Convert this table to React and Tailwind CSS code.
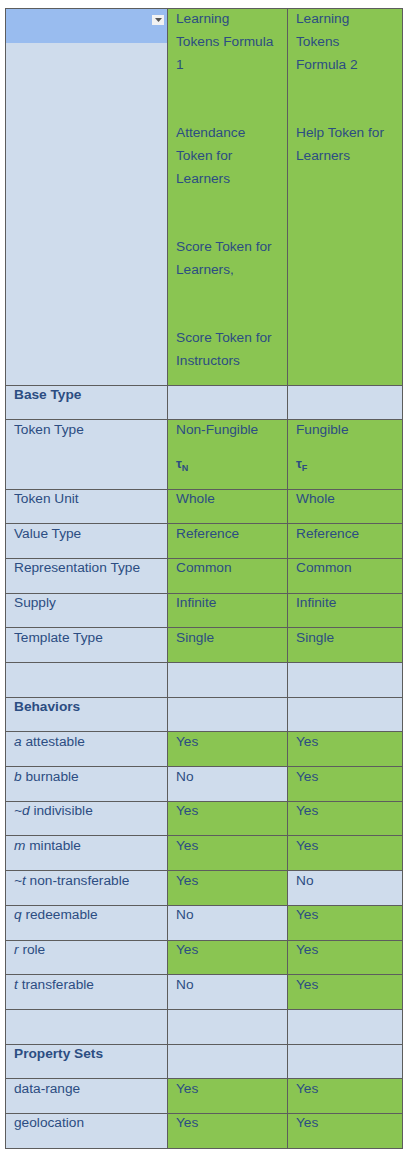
// Token taxonomy comparison table
const G = 'bg-[#8ac552]'
const B = 'bg-[#cfdcec]'

const rows = [
  { type: 'head', label: 'Base Type' },
  { type: 'tokenType' },
  { label: 'Token Unit', v: [['Whole', G], ['Whole', G]] },
  { label: 'Value Type', v: [['Reference', G], ['Reference', G]] },
  { label: 'Representation Type', v: [['Common', G], ['Common', G]] },
  { label: 'Supply', v: [['Infinite', G], ['Infinite', G]] },
  { label: 'Template Type', v: [['Single', G], ['Single', G]] },
  { type: 'empty' },
  { type: 'head', label: 'Behaviors' },
  { sym: 'a', label: 'attestable', v: [['Yes', G], ['Yes', G]] },
  { sym: 'b', label: 'burnable', v: [['No', B], ['Yes', G]] },
  { sym: '~d', label: 'indivisible', v: [['Yes', G], ['Yes', G]] },
  { sym: 'm', label: 'mintable', v: [['Yes', G], ['Yes', G]] },
  { sym: '~t', label: 'non-transferable', v: [['Yes', G], ['No', B]] },
  { sym: 'q', label: 'redeemable', v: [['No', B], ['Yes', G]] },
  { sym: 'r', label: 'role', v: [['Yes', G], ['Yes', G]] },
  { sym: 't', label: 'transferable', v: [['No', B], ['Yes', G]] },
  { type: 'empty' },
  { type: 'head', label: 'Property Sets' },
  { label: 'data-range', v: [['Yes', G], ['Yes', G]] },
  { label: 'geolocation', v: [['Yes', G], ['Yes', G]] },
]

const cell = 'border border-[#5d5d5d] align-top pl-[8px] pr-[3px] pt-0 pb-[13.2px] leading-[23px]'

function Tau({ sub }) {
  return (
    <div className="mt-[11.5px] leading-[23px] font-bold text-[13px]">
      τ<sub className="text-[9px] align-baseline relative top-[3px]">{sub}</sub>
    </div>
  )
}

function Cell({ bg, className = '', children }) {
  return (
    <td className={`${cell} ${bg} ${className}`}>
      <div className="-mt-[2.5px]">{children}</div>
    </td>
  )
}

export default function App() {
  return (
    <div className="bg-white min-h-[1157px] pl-[5px] pt-[8px] text-[#2c4d82] text-[13.7px]" style={{ fontFamily: '"Liberation Sans", Arial, sans-serif' }}>
      <table className="table-fixed border-collapse w-[397px] border border-[#566f9c]">
        <colgroup>
          <col className="w-[162px]" />
          <col className="w-[120px]" />
          <col className="w-[115px]" />
        </colgroup>
        <tbody>
          <tr>
            <td className={`border border-[#5d5d5d] align-top p-0 ${B}`}>
              <div className="h-[34px] bg-[#99bcef] flex justify-end items-start pt-[6px] pr-[3px]">
                <div className="w-[12px] h-[10px] bg-[#f2f2f2] flex items-center justify-center">
                  <svg width="7" height="4" viewBox="0 0 7 4"><path d="M0 0h7L3.5 4z" fill="#555" /></svg>
                </div>
              </div>
            </td>
            <Cell bg={G}>
              <div className="mb-[45px]">Learning<br />Tokens Formula<br />1</div>
              <div className="mb-[45px]">Attendance<br />Token for<br />Learners</div>
              <div className="mb-[45px]">Score Token for<br />Learners,</div>
              <div>Score Token for<br />Instructors</div>
            </Cell>
            <Cell bg={G}>
              <div className="mb-[45px]">Learning<br />Tokens<br />Formula 2</div>
              <div>Help Token for<br />Learners</div>
            </Cell>
          </tr>
          {rows.map((r, i) => {
            if (r.type === 'head') {
              return (
                <tr key={i}>
                  <Cell bg={B} className="font-bold">{r.label}</Cell>
                  <Cell bg={B}></Cell>
                  <Cell bg={B}></Cell>
                </tr>
              )
            }
            if (r.type === 'empty') {
              return (
                <tr key={i}>
                  <Cell bg={B}>&nbsp;</Cell>
                  <Cell bg={B}></Cell>
                  <Cell bg={B}></Cell>
                </tr>
              )
            }
            if (r.type === 'tokenType') {
              return (
                <tr key={i}>
                  <Cell bg={B}>Token Type</Cell>
                  <Cell bg={G}>
                    <div>Non-Fungible</div>
                    <Tau sub="N" />
                  </Cell>
                  <Cell bg={G}>
                    <div>Fungible</div>
                    <Tau sub="F" />
                  </Cell>
                </tr>
              )
            }
            return (
              <tr key={i}>
                <Cell bg={B} className="whitespace-nowrap">
                  {r.sym && <i>{r.sym}</i>}
                  {r.sym ? ' ' : ''}
                  {r.label}
                </Cell>
                {r.v.map(([text, bg], j) => (
                  <Cell key={j} bg={bg}>{text}</Cell>
                ))}
              </tr>
            )
          })}
        </tbody>
      </table>
    </div>
  )
}
